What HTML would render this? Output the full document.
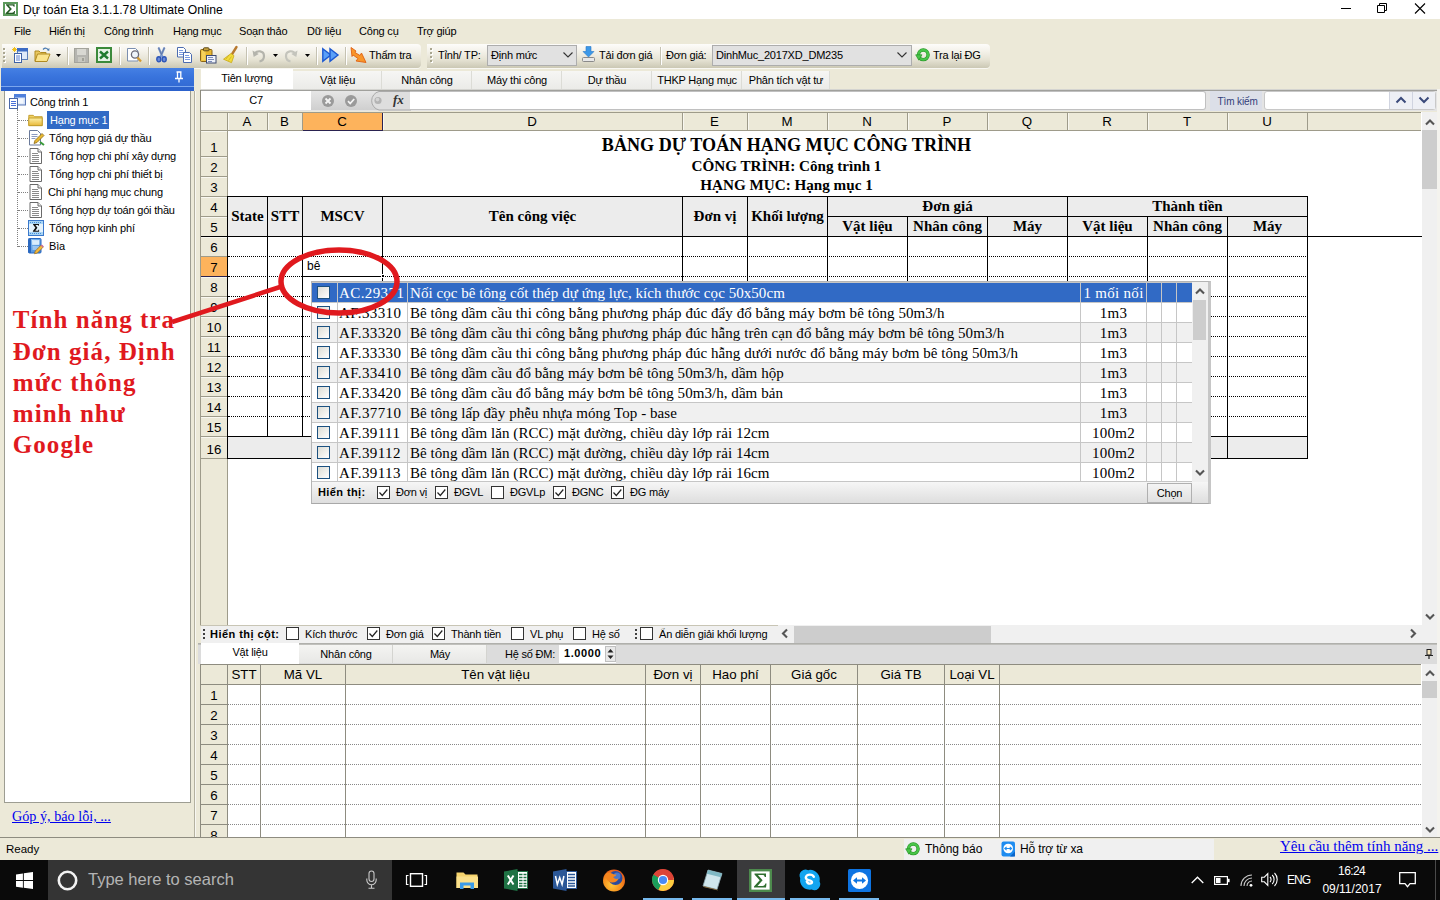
<!DOCTYPE html>
<html><head><meta charset="utf-8"><title>Du toan Eta</title>
<style>
html,body{margin:0;padding:0;}
body{width:1440px;height:900px;overflow:hidden;background:#ece9d8;position:relative;font-family:"Liberation Sans",sans-serif;font-size:11px;color:#000;}
div{position:absolute;box-sizing:border-box;}
svg{position:absolute;overflow:visible;}
.t{white-space:nowrap;line-height:1;}
</style></head><body>

<div style="left:0px;top:0px;width:1440px;height:19px;background:#fff;"></div>
<svg style="left:3px;top:2px" width="15" height="14" viewBox="0 0 15 14"><rect x="1" y="1" width="13" height="12" fill="#fff" stroke="#5c9a5c" stroke-width="2"/><path d="M3 2.200h8.600v2.600h-0.900c-0.200-1-0.700-1.400-1.800-1.400h-3.300l3.300 3.500-3.600 3.800h3.800c1.200 0 1.800-0.500 2-1.600h0.900l-0.300 2.900h-9.200v-0.700l4.200-4.400-3.700-4z" fill="#245a24"/></svg>
<div class="t" style="left:23px;top:4px;font-size:12.2px;color:#000;">Dự toán Eta 3.1.1.78 Ultimate Online</div>
<svg style="left:1340px;top:0" width="100" height="20"><path d="M1 8.5h10" stroke="#000" stroke-width="1"/><path d="M37.5 5.5h7v7h-7z M39.5 5.5v-2h7v7h-2" fill="none" stroke="#000" stroke-width="1"/><path d="M75 3.5l10 10M85 3.5l-10 10" stroke="#000" stroke-width="1.1"/></svg>
<div class="t" style="left:14px;top:26px;font-size:11px;color:#000;letter-spacing:-0.2px;">File</div>
<div class="t" style="left:49px;top:26px;font-size:11px;color:#000;letter-spacing:-0.2px;">Hiển thị</div>
<div class="t" style="left:104px;top:26px;font-size:11px;color:#000;letter-spacing:-0.2px;">Công trình</div>
<div class="t" style="left:173px;top:26px;font-size:11px;color:#000;letter-spacing:-0.2px;">Hạng mục</div>
<div class="t" style="left:239px;top:26px;font-size:11px;color:#000;letter-spacing:-0.2px;">Soạn thảo</div>
<div class="t" style="left:307px;top:26px;font-size:11px;color:#000;letter-spacing:-0.2px;">Dữ liệu</div>
<div class="t" style="left:359px;top:26px;font-size:11px;color:#000;letter-spacing:-0.2px;">Công cụ</div>
<div class="t" style="left:417px;top:26px;font-size:11px;color:#000;letter-spacing:-0.2px;">Trợ giúp</div>
<div style="left:2px;top:44px;width:419px;height:24px;background:linear-gradient(#fdfcfa 0%,#f4f2ea 30%,#e6e3d4 65%,#cbc8b4 100%);border-radius:0 4px 4px 0;box-shadow:0 1px 0 #f8f7f2;"></div>
<div style="left:427px;top:44px;width:563px;height:24px;background:linear-gradient(#fdfcfa 0%,#f4f2ea 30%,#e6e3d4 65%,#cbc8b4 100%);border-radius:0 4px 4px 0;box-shadow:0 1px 0 #f8f7f2;"></div>
<svg style="left:3px;top:48px" width="4" height="16"><rect x="1" y="1" width="2" height="2" fill="#fff"/><rect x="0" y="0" width="2" height="2" fill="#a9a690"/><rect x="1" y="5" width="2" height="2" fill="#fff"/><rect x="0" y="4" width="2" height="2" fill="#a9a690"/><rect x="1" y="9" width="2" height="2" fill="#fff"/><rect x="0" y="8" width="2" height="2" fill="#a9a690"/><rect x="1" y="13" width="2" height="2" fill="#fff"/><rect x="0" y="12" width="2" height="2" fill="#a9a690"/></svg>
<svg style="left:12px;top:47px" width="17" height="16"><rect x="5.5" y="1.5" width="10" height="11" fill="#dfeaf8" stroke="#5b7fb8"/><rect x="5.5" y="1.5" width="10" height="2.5" fill="#3d6cc4" stroke="#3d6cc4"/>
<rect x="2.5" y="6.5" width="7" height="9" fill="#fff" stroke="#3f62a6"/><path d="M4 9h4M4 11h4M4 13h4" stroke="#5b7fd0" stroke-width="1"/>
<path d="M2.5 0v5M0 2.5h5M0.8 0.8l3.4 3.4M4.2 0.8l-3.4 3.4" stroke="#f0c020" stroke-width="1"/></svg>
<svg style="left:34px;top:47px" width="17" height="16"><path d="M1 14V4h4l1.5 1.5H12V7" fill="#e9c860" stroke="#b08a20"/><path d="M1 14.5l2.5-7.5h12.5l-3 7.5z" fill="#fbe48c" stroke="#b08a20"/>
<path d="M9 2.5c2-2 4.5-1.5 5.5 0.5" fill="none" stroke="#4a7ab0" stroke-width="1.2"/><path d="M15.5 1l-0.3 3-2.6-1z" fill="#4a7ab0"/></svg>
<svg style="left:56px;top:54px" width="5" height="3"><path d="M0 0h5l-2.5 3z" fill="#000"/></svg>
<div style="left:67px;top:47px;width:1px;height:18px;background:#c5c2b2;"></div>
<div style="left:68px;top:47px;width:1px;height:18px;background:#fff;"></div>
<svg style="left:74px;top:48px" width="15" height="15"><rect x="0.5" y="0.5" width="14" height="14" fill="#b5b5b0" stroke="#a4a49c"/><rect x="3" y="1" width="9" height="6" fill="#d8d8d2"/><rect x="4" y="9" width="7" height="5" fill="#c8c8c0"/><rect x="8" y="10" width="2" height="3" fill="#a0a098"/></svg>
<svg style="left:96px;top:47px" width="16" height="16"><rect x="1" y="1" width="14" height="14" fill="#e6f2e6" stroke="#3b8a3b" stroke-width="2"/><path d="M4 4.5l8 7M12 4.5l-8 7" stroke="#1f7a2f" stroke-width="2.4"/></svg>
<div style="left:119px;top:47px;width:1px;height:18px;background:#c5c2b2;"></div>
<div style="left:120px;top:47px;width:1px;height:18px;background:#fff;"></div>
<svg style="left:126px;top:47px" width="16" height="17"><path d="M1.5 1.5h8l2.5 2.5v10h-10.5z" fill="#fff" stroke="#7b8fb0"/><circle cx="9" cy="7.5" r="3.6" fill="#eef4fb" stroke="#6a6a78" stroke-width="1.3"/><path d="M11.5 10.5l3.5 4" stroke="#d49a30" stroke-width="2.2"/></svg>
<div style="left:148px;top:47px;width:1px;height:18px;background:#c5c2b2;"></div>
<div style="left:149px;top:47px;width:1px;height:18px;background:#fff;"></div>
<svg style="left:156px;top:47px" width="11" height="16"><path d="M2.500 0.500l4 9.500M8.500 0.500l-4 9.500" stroke="#7d9bd0" stroke-width="2.100"/><path d="M2.500 0.500l3 7M8.500 0.500l-3 7" stroke="#5a6f9a" stroke-width="0.800"/><ellipse cx="2.800" cy="12.300" rx="2" ry="2.600" fill="#6a8ad8" stroke="#2c55b8" stroke-width="1.400"/><ellipse cx="8.200" cy="12.300" rx="2" ry="2.600" fill="#6a8ad8" stroke="#2c55b8" stroke-width="1.400"/></svg>
<svg style="left:177px;top:47px" width="16" height="16"><path d="M0.5 0.5h6l2 2v7.5h-8z" fill="#fff" stroke="#4c6cb0"/><path d="M2 3.5h4M2 5.5h5M2 7.5h5" stroke="#7a9ae0"/><path d="M6.500 5.500h6l2 2v8h-8z" fill="#fff" stroke="#4c6cb0"/><path d="M8 8.500h4M8 10.500h5M8 12.500h5" stroke="#7a9ae0"/></svg>
<svg style="left:200px;top:47px" width="17" height="17"><rect x="0.500" y="2.500" width="11.500" height="12" rx="1" fill="#e8b830" stroke="#8a6414"/><rect x="1.500" y="3.500" width="4" height="10" fill="#f6d25c"/><rect x="3.500" y="0.800" width="5.500" height="3" rx="0.800" fill="#c8a23c" stroke="#5c4a1c"/><rect x="6.500" y="8.500" width="9.500" height="7.500" fill="#eef2fa" stroke="#3c4a70"/><path d="M8 10.500h5M8 12.500h6M8 14.500h4" stroke="#7a8ab8"/></svg>
<svg style="left:223px;top:46px" width="16" height="18"><path d="M13.5 1l-5 8" stroke="#b87a30" stroke-width="2.4" stroke-linecap="round"/><path d="M8 7.500l3 2.200-2.500 7-8-3.500z" fill="#f2dc3c" stroke="#c8a818" stroke-width="0.8"/><path d="M3 13l3-4M5.500 14.500l3-4" stroke="#c8a818" stroke-width="0.7"/></svg>
<div style="left:246px;top:47px;width:1px;height:18px;background:#c5c2b2;"></div>
<div style="left:247px;top:47px;width:1px;height:18px;background:#fff;"></div>
<svg style="left:252px;top:48px" width="14" height="14"><path d="M2 6.500c3-5 10-4 10 1.500 0 3-2 5-4.500 5.500" fill="none" stroke="#b4b4ac" stroke-width="2.200"/><path d="M0.500 2.500l1.200 6.500 5-3z" fill="#b4b4ac"/></svg>
<svg style="left:273px;top:54px" width="5" height="3"><path d="M0 0h5l-2.5 3z" fill="#000"/></svg>
<svg style="left:284px;top:48px" width="14" height="14"><path d="M12 6.500c-3-5-10-4-10 1.500 0 3 2 5 4.500 5.500" fill="none" stroke="#c4c4bc" stroke-width="2.200"/><path d="M13.500 2.500l-1.200 6.500-5-3z" fill="#c4c4bc"/></svg>
<svg style="left:305px;top:54px" width="5" height="3"><path d="M0 0h5l-2.5 3z" fill="#000"/></svg>
<div style="left:316px;top:47px;width:1px;height:18px;background:#c5c2b2;"></div>
<div style="left:317px;top:47px;width:1px;height:18px;background:#fff;"></div>
<svg style="left:322px;top:48px" width="17" height="14"><path d="M0.800 0.800l8 6.200-8 6.200z" fill="#5aa0f8" stroke="#1b58d0" stroke-width="1.400"/><path d="M8 0.800l8 6.200-8 6.200z" fill="#5aa0f8" stroke="#1b58d0" stroke-width="1.400"/></svg>
<div style="left:345px;top:47px;width:1px;height:18px;background:#c5c2b2;"></div>
<div style="left:346px;top:47px;width:1px;height:18px;background:#fff;"></div>
<svg style="left:350px;top:47px" width="17" height="17"><path d="M1 0.500l5 3.500-1 1.500 5 3 1.500-2.500 4.500 9.500-10-1.500 2-2.500-5-3.500-1 1.500z" fill="#f8962a" stroke="#e06010" stroke-width="0.900"/></svg>
<div class="t" style="left:369px;top:50px;font-size:11px;color:#000;letter-spacing:-0.2px;">Thẩm tra</div>
<svg style="left:430px;top:48px" width="4" height="16"><rect x="1" y="1" width="2" height="2" fill="#fff"/><rect x="0" y="0" width="2" height="2" fill="#a9a690"/><rect x="1" y="5" width="2" height="2" fill="#fff"/><rect x="0" y="4" width="2" height="2" fill="#a9a690"/><rect x="1" y="9" width="2" height="2" fill="#fff"/><rect x="0" y="8" width="2" height="2" fill="#a9a690"/><rect x="1" y="13" width="2" height="2" fill="#fff"/><rect x="0" y="12" width="2" height="2" fill="#a9a690"/></svg>
<div class="t" style="left:438px;top:50px;font-size:11px;color:#000;letter-spacing:-0.2px;">Tỉnh/ TP:</div>
<div style="left:487px;top:45px;width:90px;height:21px;background:#e1e1e1;border:1px solid #adadad;"></div>
<div class="t" style="left:491px;top:50px;font-size:11px;color:#000;letter-spacing:-0.2px;">Định mức</div>
<svg style="left:563px;top:52px" width="10" height="6"><path d="M0.500 0.500l4.500 4.500 4.500-4.500" fill="none" stroke="#333" stroke-width="1.100"/></svg>
<svg style="left:582px;top:46px" width="13" height="17"><path d="M4 0.500h5v5h3l-5.500 5.500-5.500-5.500h3z" fill="#3c98e8" stroke="#2878c8" stroke-width="0.600"/><rect x="0.500" y="11.500" width="12" height="4" rx="1" fill="#e8e8e8" stroke="#8a8a8a"/></svg>
<div class="t" style="left:599px;top:50px;font-size:11px;color:#000;letter-spacing:-0.2px;">Tải đơn giá</div>
<div style="left:660px;top:47px;width:1px;height:18px;background:#c5c2b2;"></div>
<div style="left:661px;top:47px;width:1px;height:18px;background:#fff;"></div>
<div class="t" style="left:666px;top:50px;font-size:11px;color:#000;letter-spacing:-0.2px;">Đơn giá:</div>
<div style="left:712px;top:45px;width:200px;height:21px;background:#e1e1e1;border:1px solid #adadad;"></div>
<div class="t" style="left:716px;top:50px;font-size:11px;color:#000;letter-spacing:-0.2px;">DinhMuc_2017XD_DM235</div>
<svg style="left:897px;top:52px" width="10" height="6"><path d="M0.500 0.500l4.500 4.500 4.500-4.500" fill="none" stroke="#333" stroke-width="1.100"/></svg>
<svg style="left:916px;top:48px" width="14" height="14" viewBox="0 0 14 14"><circle cx="7.300" cy="6.800" r="4.800" fill="none" stroke="#279427" stroke-width="3.400"/><circle cx="7.300" cy="6.800" r="4.800" fill="none" stroke="#48c448" stroke-width="2.300"/><path d="M-0.300 6.800h6.300l-3.200 5.400z" fill="#48c448" stroke="#279427" stroke-width="0.700"/></svg>
<div class="t" style="left:933px;top:50px;font-size:11px;color:#000;letter-spacing:-0.2px;">Tra lại ĐG</div>
<div style="left:1px;top:68px;width:193px;height:23px;background:linear-gradient(#4580e4 0%,#3873dc 40%,#2f66d0 100%);"></div>
<div style="left:1px;top:86px;width:193px;height:1px;background:#7aa6ee;"></div>
<div style="left:1px;top:87px;width:193px;height:4px;background:#2c62cc;"></div>
<svg style="left:174px;top:71px" width="10" height="12"><path d="M2.500 1h5M3.500 1v6M6.800 1v6M1 7.500h8M5 7.500v4" stroke="#fff" stroke-width="1.300" fill="none"/></svg>
<div style="left:1px;top:91px;width:4px;height:712px;background:#ece9d8;"></div>
<div style="left:4px;top:91px;width:187px;height:712px;background:#fff;border:1px solid #9d9d92;border-top:none;"></div>
<div style="left:194px;top:91px;width:1px;height:746px;background:#b4b1a0;"></div>
<div style="left:195px;top:91px;width:1px;height:746px;background:#f8f7f2;"></div>
<div style="left:17px;top:109px;width:1px;height:138px;border-left:1px dotted #808080;"></div>
<div style="left:18px;top:120px;width:10px;height:1px;border-top:1px dotted #808080;"></div>
<div style="left:18px;top:138px;width:10px;height:1px;border-top:1px dotted #808080;"></div>
<div style="left:18px;top:156px;width:10px;height:1px;border-top:1px dotted #808080;"></div>
<div style="left:18px;top:174px;width:10px;height:1px;border-top:1px dotted #808080;"></div>
<div style="left:18px;top:192px;width:10px;height:1px;border-top:1px dotted #808080;"></div>
<div style="left:18px;top:210px;width:10px;height:1px;border-top:1px dotted #808080;"></div>
<div style="left:18px;top:228px;width:10px;height:1px;border-top:1px dotted #808080;"></div>
<div style="left:18px;top:246px;width:10px;height:1px;border-top:1px dotted #808080;"></div>
<svg style="left:9px;top:94px" width="17" height="15"><rect x="5.500" y="0.500" width="11" height="10.500" fill="#d4e2f8" stroke="#5a78b8"/><rect x="5.500" y="0.500" width="11" height="2.500" fill="#4f80dc" stroke="#4f80dc"/><rect x="7.500" y="4.500" width="7" height="5" fill="#f4f8fe"/>
<rect x="0.500" y="4.500" width="8" height="10" fill="#fff" stroke="#4a68a8"/><path d="M2 7.500h5M2 9.500h5M2 11.500h5" stroke="#4a70d8"/></svg>
<div class="t" style="left:30px;top:97px;font-size:11px;color:#000;letter-spacing:-0.2px;">Công trình 1</div>
<svg style="left:28px;top:114px" width="15" height="12.5" viewBox="0 0 16 14"><path d="M0.500 13V1.500h5l1.500 1.500h8.500v10z" fill="#f0d060" stroke="#c09a28"/><path d="M0.500 13V4.500h15v8.500z" fill="url(#fg)" stroke="#c09a28"/><defs><linearGradient id="fg" x1="0" y1="0" x2="0" y2="1"><stop offset="0" stop-color="#fdf0a8"/><stop offset="1" stop-color="#e8b838"/></linearGradient></defs></svg>
<div style="left:47px;top:111px;width:62px;height:18px;background:#316ac5;"></div>
<div class="t" style="left:50px;top:115px;font-size:11px;color:#fff;letter-spacing:-0.2px;">Hạng mục 1</div>
<svg style="left:29px;top:130px" width="16" height="16"><path d="M0.500 0.500h8l3 3v11.500h-11z" fill="#fff" stroke="#6a7a9a"/><path d="M2.500 4.500h6M2.500 6.500h6M2.500 8.500h4" stroke="#8a9ac0"/><path d="M5 13.500l1-3 7-7 2 2-7 7z" fill="#e8b830" stroke="#8a6a18" stroke-width="0.800"/><path d="M11 12l4 3" stroke="#3a9a3a" stroke-width="2"/></svg>
<div class="t" style="left:49px;top:133px;font-size:11px;color:#000;letter-spacing:-0.2px;">Tổng hợp giá dự thầu</div>
<div class="t" style="left:49px;top:151px;font-size:11px;color:#000;letter-spacing:-0.2px;">Tổng hợp chi phí xây dựng</div>
<div class="t" style="left:49px;top:169px;font-size:11px;color:#000;letter-spacing:-0.2px;">Tổng hợp chi phí thiết bị</div>
<div class="t" style="left:48px;top:187px;font-size:11px;color:#000;letter-spacing:-0.2px;">Chi phí hạng mục chung</div>
<div class="t" style="left:49px;top:205px;font-size:11px;color:#000;letter-spacing:-0.2px;">Tổng hợp dự toán gói thầu</div>
<div class="t" style="left:49px;top:223px;font-size:11px;color:#000;letter-spacing:-0.2px;">Tổng hợp kinh phí</div>
<div class="t" style="left:49px;top:241px;font-size:11px;color:#000;letter-spacing:-0.2px;">Bìa</div>
<svg style="left:29px;top:148px" width="14" height="16" viewBox="0 0 13 16"><path d="M0.500 0.500h8l3.500 3.500v11.500h-11.500z" fill="#fff" stroke="#6a6a6a"/><path d="M8.500 0.500v3.500h3.500" fill="#eee" stroke="#6a6a6a"/><path d="M2.500 5.500h6M2.500 7.500h7M2.500 9.500h7M2.500 11.500h7M2.500 13.500h7" stroke="#8a8a8a"/></svg>
<svg style="left:29px;top:166px" width="14" height="16" viewBox="0 0 13 16"><path d="M0.500 0.500h8l3.500 3.500v11.500h-11.500z" fill="#fff" stroke="#6a6a6a"/><path d="M8.500 0.500v3.500h3.500" fill="#eee" stroke="#6a6a6a"/><path d="M2.500 5.500h6M2.500 7.500h7M2.500 9.500h7M2.500 11.500h7M2.500 13.500h7" stroke="#8a8a8a"/></svg>
<svg style="left:29px;top:184px" width="14" height="16" viewBox="0 0 13 16"><path d="M0.500 0.500h8l3.500 3.500v11.500h-11.500z" fill="#fff" stroke="#6a6a6a"/><path d="M8.500 0.500v3.500h3.500" fill="#eee" stroke="#6a6a6a"/><path d="M2.500 5.500h6M2.500 7.500h7M2.500 9.500h7M2.500 11.500h7M2.500 13.500h7" stroke="#8a8a8a"/></svg>
<svg style="left:29px;top:202px" width="14" height="16" viewBox="0 0 13 16"><path d="M0.500 0.500h8l3.500 3.500v11.500h-11.500z" fill="#fff" stroke="#6a6a6a"/><path d="M8.500 0.500v3.500h3.500" fill="#eee" stroke="#6a6a6a"/><path d="M2.500 5.500h6M2.500 7.500h7M2.500 9.500h7M2.500 11.500h7M2.500 13.500h7" stroke="#8a8a8a"/></svg>
<svg style="left:28px;top:220px" width="16" height="16"><rect x="0.500" y="0.500" width="15" height="15" fill="#e4f2fc" stroke="#3a78cc"/><rect x="1" y="1" width="14" height="3" fill="#a8d4f4"/><rect x="1" y="12" width="14" height="3" fill="#a8d4f4"/><path d="M2 2.500h12M2 13.500h12" stroke="#4a90d8" stroke-dasharray="1 1"/><path d="M5 4h6v1.800h-0.800v-0.800h-2.800l2 2.800-2.100 2.900h3v-0.900h0.800v1.900h-6.200v-0.700l2.500-3.300-2.400-3.100z" fill="#111"/></svg>
<svg style="left:28px;top:238px" width="17" height="17"><defs><linearGradient id="nb" x1="0" y1="0" x2="1" y2="1"><stop offset="0" stop-color="#8cc4f4"/><stop offset="1" stop-color="#3a80d8"/></linearGradient></defs><rect x="0.500" y="0.500" width="12.500" height="14.500" rx="1" fill="url(#nb)" stroke="#2a68c0"/><rect x="0.500" y="0.500" width="2.500" height="14.500" fill="#2a68c0"/><rect x="4.500" y="2.500" width="6.500" height="4" fill="#d8ecfc" stroke="#eaf4fe" stroke-width="0.600"/><path d="M4.500 9h6.500M4.500 11h5" stroke="#d8ecfc"/><path d="M6.500 15.800l0.800-2.800 6-6 2 2-6 6z" fill="#f4b83c" stroke="#a07018" stroke-width="0.700"/><path d="M13.300 7l2 2" stroke="#c86aa0" stroke-width="1.600"/></svg>
<div class="t" style="left:12px;top:809px;font-size:14.2px;color:#0000ee;font-family:'Liberation Serif', serif;text-decoration:underline;">Góp ý, báo lỗi, ...</div>
<div style="left:201px;top:69px;width:92px;height:21px;background:#fff;"></div>
<div style="left:293px;top:71px;width:89px;height:18px;background:linear-gradient(#f6f6f4,#ebebe8);border-right:1px solid #dcdcd6;"></div>
<div style="left:382px;top:71px;width:90px;height:18px;background:linear-gradient(#f6f6f4,#ebebe8);border-right:1px solid #dcdcd6;"></div>
<div style="left:472px;top:71px;width:90px;height:18px;background:linear-gradient(#f6f6f4,#ebebe8);border-right:1px solid #dcdcd6;"></div>
<div style="left:562px;top:71px;width:90px;height:18px;background:linear-gradient(#f6f6f4,#ebebe8);border-right:1px solid #dcdcd6;"></div>
<div style="left:652px;top:71px;width:90px;height:18px;background:linear-gradient(#f6f6f4,#ebebe8);border-right:1px solid #dcdcd6;"></div>
<div style="left:742px;top:71px;width:88px;height:18px;background:linear-gradient(#f6f6f4,#ebebe8);border-right:1px solid #dcdcd6;"></div>
<div class="t" style="left:201px;top:73px;font-size:11px;color:#000;letter-spacing:-0.2px;width:92px;text-align:center;">Tiên lượng</div>
<div class="t" style="left:293px;top:75px;font-size:11px;color:#000;letter-spacing:-0.2px;width:89px;text-align:center;">Vật liệu</div>
<div class="t" style="left:382px;top:75px;font-size:11px;color:#000;letter-spacing:-0.2px;width:90px;text-align:center;">Nhân công</div>
<div class="t" style="left:472px;top:75px;font-size:11px;color:#000;letter-spacing:-0.2px;width:90px;text-align:center;">Máy thi công</div>
<div class="t" style="left:562px;top:75px;font-size:11px;color:#000;letter-spacing:-0.2px;width:90px;text-align:center;">Dự thầu</div>
<div class="t" style="left:652px;top:75px;font-size:11px;color:#000;letter-spacing:-0.2px;width:90px;text-align:center;">THKP Hạng mục</div>
<div class="t" style="left:742px;top:75px;font-size:11px;color:#000;letter-spacing:-0.2px;width:88px;text-align:center;">Phân tích vật tư</div>
<div style="left:200px;top:89px;width:1237px;height:1px;background:#d4d4d0;"></div>
<div style="left:200px;top:90px;width:1237px;height:1px;background:#a0a09c;"></div>
<div style="left:200px;top:90px;width:1px;height:22px;background:#8c8a7c;"></div>
<div style="left:201px;top:91px;width:1236px;height:20px;background:#e4e4e4;"></div>
<div style="left:201px;top:91px;width:110px;height:19px;background:#fff;"></div>
<div class="t" style="left:201px;top:95px;font-size:11px;color:#000;letter-spacing:-0.2px;width:110px;text-align:center;">C7</div>
<div style="left:311px;top:91px;width:100px;height:19px;background:linear-gradient(#e6e6e6,#cfcfcf);"></div>
<svg style="left:321px;top:94px" width="14" height="14"><circle cx="7" cy="7" r="6" fill="#9a9a9a"/><path d="M4.500 4.500l5 5M9.500 4.500l-5 5" stroke="#f4f4f4" stroke-width="1.800"/></svg>
<svg style="left:344px;top:94px" width="14" height="14"><circle cx="7" cy="7" r="6" fill="#9a9a9a"/><path d="M4 7.200l2.200 2.300 4-4.500" stroke="#f4f4f4" stroke-width="1.800" fill="none"/></svg>
<svg style="left:367px;top:91px" width="44" height="19"><path d="M12 0.500a9.500 9.500 0 0 0 0 18.500h32v-18.500z" fill="#dedede" stroke="#9c9c9c" stroke-width="0.800"/><circle cx="11" cy="9.500" r="3.600" fill="#b4b4b4"/><circle cx="10.500" cy="8.600" r="1.800" fill="#d4d4d4"/></svg>
<div class="t" style="left:393px;top:93px;font-size:13px;color:#333;font-family:'Liberation Serif', serif;font-weight:bold;font-style:italic;"><i>f</i>x</div>
<div style="left:410px;top:91px;width:796px;height:19px;background:#fff;border:1px solid #c0c0c0;border-radius:0 3px 3px 0;border-left:none;"></div>
<div style="left:1210px;top:91px;width:52px;height:20px;background:#dcdfe8;"></div>
<div class="t" style="left:1217.5px;top:97px;font-size:10px;color:#33407a;letter-spacing:-0.1px;">Tìm kiếm</div>
<div style="left:1264px;top:91px;width:172px;height:19px;background:#fff;border:1px solid #c8c8c8;border-radius:3px;"></div>
<div style="left:1389px;top:92px;width:46px;height:17px;background:#eef0f5;border-left:1px solid #d0d4e0;"></div>
<div style="left:1412px;top:92px;width:1px;height:17px;background:#d0d4e0;"></div>
<svg style="left:1395px;top:96px" width="12" height="8"><path d="M1.500 6.500l4.500-4.500 4.500 4.500" fill="none" stroke="#3a4a7a" stroke-width="2"/></svg>
<svg style="left:1418px;top:96px" width="12" height="8"><path d="M1.500 1.500l4.500 4.500 4.500-4.500" fill="none" stroke="#3a4a7a" stroke-width="2"/></svg>
<div style="left:200px;top:112px;width:1222px;height:514px;background:#fff;"></div>
<div style="left:200px;top:112px;width:1px;height:514px;background:#9e9b8a;"></div>
<div style="left:201px;top:112px;width:1220px;height:19px;background:#ece9d8;border-top:1px solid #9e9b8a;border-bottom:1px solid #9e9b8a;"></div>
<div style="left:201px;top:131px;width:27px;height:494px;background:#ece9d8;border-right:1px solid #9e9b8a;"></div>
<div style="left:227px;top:113px;width:1px;height:17px;background:#9e9b8a;"></div>
<div style="left:267px;top:113px;width:1px;height:17px;background:#9e9b8a;"></div>
<div style="left:228px;top:113px;width:1px;height:17px;background:#f8f7f0;"></div>
<div class="t" style="left:227.5px;top:114.5px;font-size:13.3px;color:#000;width:39px;text-align:center;">A</div>
<div style="left:302px;top:113px;width:1px;height:17px;background:#9e9b8a;"></div>
<div style="left:268px;top:113px;width:1px;height:17px;background:#f8f7f0;"></div>
<div class="t" style="left:267.5px;top:114.5px;font-size:13.3px;color:#000;width:34px;text-align:center;">B</div>
<div style="left:303px;top:113px;width:80px;height:18px;background:#fdb35c;border-right:1px solid #2a2250;border-bottom:1px solid #2a2250;"></div>
<div class="t" style="left:302.5px;top:114.5px;font-size:13.3px;color:#000;width:79px;text-align:center;">C</div>
<div style="left:682px;top:113px;width:1px;height:17px;background:#9e9b8a;"></div>
<div style="left:383px;top:113px;width:1px;height:17px;background:#f8f7f0;"></div>
<div class="t" style="left:382.5px;top:114.5px;font-size:13.3px;color:#000;width:299px;text-align:center;">D</div>
<div style="left:747px;top:113px;width:1px;height:17px;background:#9e9b8a;"></div>
<div style="left:683px;top:113px;width:1px;height:17px;background:#f8f7f0;"></div>
<div class="t" style="left:682.5px;top:114.5px;font-size:13.3px;color:#000;width:64px;text-align:center;">E</div>
<div style="left:827px;top:113px;width:1px;height:17px;background:#9e9b8a;"></div>
<div style="left:748px;top:113px;width:1px;height:17px;background:#f8f7f0;"></div>
<div class="t" style="left:747.5px;top:114.5px;font-size:13.3px;color:#000;width:79px;text-align:center;">M</div>
<div style="left:907px;top:113px;width:1px;height:17px;background:#9e9b8a;"></div>
<div style="left:828px;top:113px;width:1px;height:17px;background:#f8f7f0;"></div>
<div class="t" style="left:827.5px;top:114.5px;font-size:13.3px;color:#000;width:79px;text-align:center;">N</div>
<div style="left:987px;top:113px;width:1px;height:17px;background:#9e9b8a;"></div>
<div style="left:908px;top:113px;width:1px;height:17px;background:#f8f7f0;"></div>
<div class="t" style="left:907.5px;top:114.5px;font-size:13.3px;color:#000;width:79px;text-align:center;">P</div>
<div style="left:1067px;top:113px;width:1px;height:17px;background:#9e9b8a;"></div>
<div style="left:988px;top:113px;width:1px;height:17px;background:#f8f7f0;"></div>
<div class="t" style="left:987.5px;top:114.5px;font-size:13.3px;color:#000;width:79px;text-align:center;">Q</div>
<div style="left:1147px;top:113px;width:1px;height:17px;background:#9e9b8a;"></div>
<div style="left:1068px;top:113px;width:1px;height:17px;background:#f8f7f0;"></div>
<div class="t" style="left:1067.5px;top:114.5px;font-size:13.3px;color:#000;width:79px;text-align:center;">R</div>
<div style="left:1227px;top:113px;width:1px;height:17px;background:#9e9b8a;"></div>
<div style="left:1148px;top:113px;width:1px;height:17px;background:#f8f7f0;"></div>
<div class="t" style="left:1147.5px;top:114.5px;font-size:13.3px;color:#000;width:79px;text-align:center;">T</div>
<div style="left:1307px;top:113px;width:1px;height:17px;background:#9e9b8a;"></div>
<div style="left:1228px;top:113px;width:1px;height:17px;background:#f8f7f0;"></div>
<div class="t" style="left:1227.5px;top:114.5px;font-size:13.3px;color:#000;width:79px;text-align:center;">U</div>
<div style="left:201px;top:156px;width:26px;height:1px;background:#9e9b8a;"></div>
<div style="left:201px;top:131px;width:26px;height:1px;background:#f8f7f0;"></div>
<div class="t" style="left:201px;top:141px;font-size:13.3px;color:#000;width:26px;text-align:center;">1</div>
<div style="left:201px;top:176px;width:26px;height:1px;background:#9e9b8a;"></div>
<div style="left:201px;top:157px;width:26px;height:1px;background:#f8f7f0;"></div>
<div class="t" style="left:201px;top:161px;font-size:13.3px;color:#000;width:26px;text-align:center;">2</div>
<div style="left:201px;top:196px;width:26px;height:1px;background:#9e9b8a;"></div>
<div style="left:201px;top:177px;width:26px;height:1px;background:#f8f7f0;"></div>
<div class="t" style="left:201px;top:181px;font-size:13.3px;color:#000;width:26px;text-align:center;">3</div>
<div style="left:201px;top:216px;width:26px;height:1px;background:#9e9b8a;"></div>
<div style="left:201px;top:197px;width:26px;height:1px;background:#f8f7f0;"></div>
<div class="t" style="left:201px;top:201px;font-size:13.3px;color:#000;width:26px;text-align:center;">4</div>
<div style="left:201px;top:236px;width:26px;height:1px;background:#9e9b8a;"></div>
<div style="left:201px;top:217px;width:26px;height:1px;background:#f8f7f0;"></div>
<div class="t" style="left:201px;top:221px;font-size:13.3px;color:#000;width:26px;text-align:center;">5</div>
<div style="left:201px;top:256px;width:26px;height:1px;background:#9e9b8a;"></div>
<div style="left:201px;top:237px;width:26px;height:1px;background:#f8f7f0;"></div>
<div class="t" style="left:201px;top:241px;font-size:13.3px;color:#000;width:26px;text-align:center;">6</div>
<div style="left:201px;top:257px;width:27px;height:20px;background:#fdb35c;border-right:1px solid #2a2250;border-bottom:1px solid #2a2250;"></div>
<div class="t" style="left:201px;top:261px;font-size:13.3px;color:#000;width:26px;text-align:center;">7</div>
<div style="left:201px;top:296px;width:26px;height:1px;background:#9e9b8a;"></div>
<div style="left:201px;top:277px;width:26px;height:1px;background:#f8f7f0;"></div>
<div class="t" style="left:201px;top:281px;font-size:13.3px;color:#000;width:26px;text-align:center;">8</div>
<div style="left:201px;top:316px;width:26px;height:1px;background:#9e9b8a;"></div>
<div style="left:201px;top:297px;width:26px;height:1px;background:#f8f7f0;"></div>
<div class="t" style="left:201px;top:301px;font-size:13.3px;color:#000;width:26px;text-align:center;">9</div>
<div style="left:201px;top:336px;width:26px;height:1px;background:#9e9b8a;"></div>
<div style="left:201px;top:317px;width:26px;height:1px;background:#f8f7f0;"></div>
<div class="t" style="left:201px;top:321px;font-size:13.3px;color:#000;width:26px;text-align:center;">10</div>
<div style="left:201px;top:356px;width:26px;height:1px;background:#9e9b8a;"></div>
<div style="left:201px;top:337px;width:26px;height:1px;background:#f8f7f0;"></div>
<div class="t" style="left:201px;top:341px;font-size:13.3px;color:#000;width:26px;text-align:center;">11</div>
<div style="left:201px;top:376px;width:26px;height:1px;background:#9e9b8a;"></div>
<div style="left:201px;top:357px;width:26px;height:1px;background:#f8f7f0;"></div>
<div class="t" style="left:201px;top:361px;font-size:13.3px;color:#000;width:26px;text-align:center;">12</div>
<div style="left:201px;top:396px;width:26px;height:1px;background:#9e9b8a;"></div>
<div style="left:201px;top:377px;width:26px;height:1px;background:#f8f7f0;"></div>
<div class="t" style="left:201px;top:381px;font-size:13.3px;color:#000;width:26px;text-align:center;">13</div>
<div style="left:201px;top:416px;width:26px;height:1px;background:#9e9b8a;"></div>
<div style="left:201px;top:397px;width:26px;height:1px;background:#f8f7f0;"></div>
<div class="t" style="left:201px;top:401px;font-size:13.3px;color:#000;width:26px;text-align:center;">14</div>
<div style="left:201px;top:436px;width:26px;height:1px;background:#9e9b8a;"></div>
<div style="left:201px;top:417px;width:26px;height:1px;background:#f8f7f0;"></div>
<div class="t" style="left:201px;top:421px;font-size:13.3px;color:#000;width:26px;text-align:center;">15</div>
<div style="left:201px;top:458px;width:26px;height:1px;background:#9e9b8a;"></div>
<div style="left:201px;top:437px;width:26px;height:1px;background:#f8f7f0;"></div>
<div class="t" style="left:201px;top:443px;font-size:13.3px;color:#000;width:26px;text-align:center;">16</div>
<div class="t" style="left:486.5px;top:135.5px;font-size:18.1px;color:#000;font-family:'Liberation Serif', serif;font-weight:bold;width:600px;text-align:center;">BẢNG DỰ TOÁN HẠNG MỤC CÔNG TRÌNH</div>
<div class="t" style="left:486.5px;top:158.2px;font-size:15.15px;color:#000;font-family:'Liberation Serif', serif;font-weight:bold;width:600px;text-align:center;">CÔNG TRÌNH: Công trình 1</div>
<div class="t" style="left:486.5px;top:177.4px;font-size:15.15px;color:#000;font-family:'Liberation Serif', serif;font-weight:bold;width:600px;text-align:center;">HẠNG MỤC: Hạng mục 1</div>
<div style="left:227px;top:196px;width:1081px;height:41px;background:#ececec;border:1px solid #000;"></div>
<div style="left:267px;top:196px;width:1px;height:41px;background:#000;"></div>
<div style="left:302px;top:196px;width:1px;height:41px;background:#000;"></div>
<div style="left:382px;top:196px;width:1px;height:41px;background:#000;"></div>
<div style="left:682px;top:196px;width:1px;height:41px;background:#000;"></div>
<div style="left:747px;top:196px;width:1px;height:41px;background:#000;"></div>
<div style="left:827px;top:196px;width:1px;height:41px;background:#000;"></div>
<div style="left:1067px;top:196px;width:1px;height:41px;background:#000;"></div>
<div style="left:907px;top:216px;width:1px;height:21px;background:#000;"></div>
<div style="left:987px;top:216px;width:1px;height:21px;background:#000;"></div>
<div style="left:1147px;top:216px;width:1px;height:21px;background:#000;"></div>
<div style="left:1227px;top:216px;width:1px;height:21px;background:#000;"></div>
<div style="left:827px;top:216px;width:481px;height:1px;background:#000;"></div>
<div class="t" style="left:228px;top:208.5px;font-size:15px;color:#000;font-family:'Liberation Serif', serif;font-weight:bold;width:39px;text-align:center;">State</div>
<div class="t" style="left:268px;top:208.5px;font-size:15px;color:#000;font-family:'Liberation Serif', serif;font-weight:bold;width:34px;text-align:center;">STT</div>
<div class="t" style="left:303px;top:208.5px;font-size:15px;color:#000;font-family:'Liberation Serif', serif;font-weight:bold;width:79px;text-align:center;">MSCV</div>
<div class="t" style="left:383px;top:208.5px;font-size:15px;color:#000;font-family:'Liberation Serif', serif;font-weight:bold;width:299px;text-align:center;">Tên công việc</div>
<div class="t" style="left:683px;top:208.5px;font-size:15px;color:#000;font-family:'Liberation Serif', serif;font-weight:bold;width:64px;text-align:center;">Đơn vị</div>
<div class="t" style="left:748px;top:208.5px;font-size:15px;color:#000;font-family:'Liberation Serif', serif;font-weight:bold;width:79px;text-align:center;">Khối lượng</div>
<div class="t" style="left:828px;top:198.5px;font-size:15px;color:#000;font-family:'Liberation Serif', serif;font-weight:bold;width:239px;text-align:center;">Đơn giá</div>
<div class="t" style="left:1068px;top:198.5px;font-size:15px;color:#000;font-family:'Liberation Serif', serif;font-weight:bold;width:239px;text-align:center;">Thành tiền</div>
<div class="t" style="left:828px;top:218.5px;font-size:15px;color:#000;font-family:'Liberation Serif', serif;font-weight:bold;width:79px;text-align:center;">Vật liệu</div>
<div class="t" style="left:1068px;top:218.5px;font-size:15px;color:#000;font-family:'Liberation Serif', serif;font-weight:bold;width:79px;text-align:center;">Vật liệu</div>
<div class="t" style="left:908px;top:218.5px;font-size:15px;color:#000;font-family:'Liberation Serif', serif;font-weight:bold;width:79px;text-align:center;">Nhân công</div>
<div class="t" style="left:1148px;top:218.5px;font-size:15px;color:#000;font-family:'Liberation Serif', serif;font-weight:bold;width:79px;text-align:center;">Nhân công</div>
<div class="t" style="left:988px;top:218.5px;font-size:15px;color:#000;font-family:'Liberation Serif', serif;font-weight:bold;width:79px;text-align:center;">Máy</div>
<div class="t" style="left:1228px;top:218.5px;font-size:15px;color:#000;font-family:'Liberation Serif', serif;font-weight:bold;width:79px;text-align:center;">Máy</div>
<div style="left:201px;top:236px;width:1221px;height:1px;background:#000;"></div>
<div style="left:228px;top:256px;width:1080px;height:1px;border-top:1px dotted #000;"></div>
<div style="left:228px;top:276px;width:1080px;height:1px;border-top:1px dotted #000;"></div>
<div style="left:228px;top:296px;width:1080px;height:1px;border-top:1px dotted #000;"></div>
<div style="left:228px;top:316px;width:1080px;height:1px;border-top:1px dotted #000;"></div>
<div style="left:228px;top:336px;width:1080px;height:1px;border-top:1px dotted #000;"></div>
<div style="left:228px;top:356px;width:1080px;height:1px;border-top:1px dotted #000;"></div>
<div style="left:228px;top:376px;width:1080px;height:1px;border-top:1px dotted #000;"></div>
<div style="left:228px;top:396px;width:1080px;height:1px;border-top:1px dotted #000;"></div>
<div style="left:228px;top:416px;width:1080px;height:1px;border-top:1px dotted #000;"></div>
<div style="left:227px;top:237px;width:1px;height:200px;background:#000;"></div>
<div style="left:267px;top:237px;width:1px;height:200px;background:#000;"></div>
<div style="left:302px;top:237px;width:1px;height:200px;background:#000;"></div>
<div style="left:382px;top:237px;width:1px;height:200px;background:#000;"></div>
<div style="left:682px;top:237px;width:1px;height:200px;background:#000;"></div>
<div style="left:747px;top:237px;width:1px;height:200px;background:#000;"></div>
<div style="left:827px;top:237px;width:1px;height:200px;background:#000;"></div>
<div style="left:907px;top:237px;width:1px;height:200px;background:#000;"></div>
<div style="left:987px;top:237px;width:1px;height:200px;background:#000;"></div>
<div style="left:1067px;top:237px;width:1px;height:200px;background:#000;"></div>
<div style="left:1147px;top:237px;width:1px;height:200px;background:#000;"></div>
<div style="left:1227px;top:237px;width:1px;height:200px;background:#000;"></div>
<div style="left:1307px;top:237px;width:1px;height:200px;background:#000;"></div>
<div style="left:228px;top:436px;width:1080px;height:23px;background:#ececec;border-top:1px solid #000;border-bottom:1px solid #000;"></div>
<div style="left:1227px;top:436px;width:1px;height:23px;background:#000;"></div>
<div style="left:1307px;top:436px;width:1px;height:23px;background:#000;"></div>
<div style="left:227px;top:436px;width:1px;height:23px;background:#000;"></div>
<div style="left:302px;top:257px;width:81px;height:20px;border:1px solid #000;border-top:none;background:#fff;"></div>
<div style="left:381px;top:274px;width:4px;height:4px;background:#000;border:1px solid #fff;"></div>
<div class="t" style="left:307px;top:260px;font-size:12px;color:#000;">bê</div>
<div style="left:1422px;top:112px;width:15px;height:513px;background:#f0f0f0;"></div>
<div style="left:1422px;top:130px;width:15px;height:59px;background:#cdcdcd;"></div>
<svg style="left:1424.5px;top:118.5px" width="10" height="6"><path d="M1 5.500l4-4 4 4" fill="none" stroke="#555" stroke-width="2.100"/></svg>
<svg style="left:1424.5px;top:614px" width="10" height="6"><path d="M1 0.500l4 4 4-4" fill="none" stroke="#555" stroke-width="2.100"/></svg>
<div style="left:1437px;top:89px;width:3px;height:748px;background:#f4f3ee;"></div>
<div style="left:311px;top:281px;width:900px;height:223px;background:#f0f0f0;border:1px solid #b4b4b4;border-right:3px solid #c6c6c6;border-bottom:1px solid #a8a8a8;"></div>
<div style="left:312px;top:282px;width:880px;height:200px;background:#fff;"></div>
<div style="left:312px;top:283px;width:880px;height:19px;background:#316ac5;"></div>
<div style="left:312px;top:302px;width:880px;height:1px;background:#c6c6c6;"></div>
<div style="left:317px;top:286px;width:13px;height:13px;background:linear-gradient(135deg,#dcdcd4,#fff);border:1px solid #1c5180;"></div>
<div class="t" style="left:339px;top:286px;font-size:15px;color:#fff;font-family:'Liberation Serif', serif;letter-spacing:0.4px;">AC.29371</div>
<div class="t" style="left:410px;top:286px;font-size:15px;color:#fff;font-family:'Liberation Serif', serif;letter-spacing:0.055px;">Nối cọc bê tông cốt thép dự ứng lực, kích thước cọc 50x50cm</div>
<div class="t" style="left:1081px;top:286px;font-size:15px;color:#fff;font-family:'Liberation Serif', serif;letter-spacing:0.3px;width:65px;text-align:center;">1 mối nối</div>
<div style="left:312px;top:303px;width:880px;height:19px;background:#fff;"></div>
<div style="left:312px;top:322px;width:880px;height:1px;background:#c6c6c6;"></div>
<div style="left:317px;top:306px;width:13px;height:13px;background:linear-gradient(135deg,#dcdcd4,#fff);border:1px solid #1c5180;"></div>
<div class="t" style="left:339px;top:306px;font-size:15px;color:#000;font-family:'Liberation Serif', serif;letter-spacing:0.4px;">AF.33310</div>
<div class="t" style="left:410px;top:306px;font-size:15px;color:#000;font-family:'Liberation Serif', serif;letter-spacing:0.055px;">Bê tông dầm cầu thi công bằng phương pháp đúc đẩy đổ bằng máy bơm bê tông 50m3/h</div>
<div class="t" style="left:1081px;top:306px;font-size:15px;color:#000;font-family:'Liberation Serif', serif;letter-spacing:0.3px;width:65px;text-align:center;">1m3</div>
<div style="left:312px;top:323px;width:880px;height:19px;background:#f0f0f0;"></div>
<div style="left:312px;top:342px;width:880px;height:1px;background:#c6c6c6;"></div>
<div style="left:317px;top:326px;width:13px;height:13px;background:linear-gradient(135deg,#dcdcd4,#fff);border:1px solid #1c5180;"></div>
<div class="t" style="left:339px;top:326px;font-size:15px;color:#000;font-family:'Liberation Serif', serif;letter-spacing:0.4px;">AF.33320</div>
<div class="t" style="left:410px;top:326px;font-size:15px;color:#000;font-family:'Liberation Serif', serif;letter-spacing:0.055px;">Bê tông dầm cầu thi công bằng phương pháp đúc hẫng trên cạn đổ bằng máy bơm bê tông 50m3/h</div>
<div class="t" style="left:1081px;top:326px;font-size:15px;color:#000;font-family:'Liberation Serif', serif;letter-spacing:0.3px;width:65px;text-align:center;">1m3</div>
<div style="left:312px;top:343px;width:880px;height:19px;background:#fff;"></div>
<div style="left:312px;top:362px;width:880px;height:1px;background:#c6c6c6;"></div>
<div style="left:317px;top:346px;width:13px;height:13px;background:linear-gradient(135deg,#dcdcd4,#fff);border:1px solid #1c5180;"></div>
<div class="t" style="left:339px;top:346px;font-size:15px;color:#000;font-family:'Liberation Serif', serif;letter-spacing:0.4px;">AF.33330</div>
<div class="t" style="left:410px;top:346px;font-size:15px;color:#000;font-family:'Liberation Serif', serif;letter-spacing:0.055px;">Bê tông dầm cầu thi công bằng phương pháp đúc hẫng dưới nước đổ bằng máy bơm bê tông 50m3/h</div>
<div class="t" style="left:1081px;top:346px;font-size:15px;color:#000;font-family:'Liberation Serif', serif;letter-spacing:0.3px;width:65px;text-align:center;">1m3</div>
<div style="left:312px;top:363px;width:880px;height:19px;background:#f0f0f0;"></div>
<div style="left:312px;top:382px;width:880px;height:1px;background:#c6c6c6;"></div>
<div style="left:317px;top:366px;width:13px;height:13px;background:linear-gradient(135deg,#dcdcd4,#fff);border:1px solid #1c5180;"></div>
<div class="t" style="left:339px;top:366px;font-size:15px;color:#000;font-family:'Liberation Serif', serif;letter-spacing:0.4px;">AF.33410</div>
<div class="t" style="left:410px;top:366px;font-size:15px;color:#000;font-family:'Liberation Serif', serif;letter-spacing:0.055px;">Bê tông dầm cầu đổ bằng máy bơm bê tông 50m3/h, dầm hộp</div>
<div class="t" style="left:1081px;top:366px;font-size:15px;color:#000;font-family:'Liberation Serif', serif;letter-spacing:0.3px;width:65px;text-align:center;">1m3</div>
<div style="left:312px;top:383px;width:880px;height:19px;background:#fff;"></div>
<div style="left:312px;top:402px;width:880px;height:1px;background:#c6c6c6;"></div>
<div style="left:317px;top:386px;width:13px;height:13px;background:linear-gradient(135deg,#dcdcd4,#fff);border:1px solid #1c5180;"></div>
<div class="t" style="left:339px;top:386px;font-size:15px;color:#000;font-family:'Liberation Serif', serif;letter-spacing:0.4px;">AF.33420</div>
<div class="t" style="left:410px;top:386px;font-size:15px;color:#000;font-family:'Liberation Serif', serif;letter-spacing:0.055px;">Bê tông dầm cầu đổ bằng máy bơm bê tông 50m3/h, dầm bản</div>
<div class="t" style="left:1081px;top:386px;font-size:15px;color:#000;font-family:'Liberation Serif', serif;letter-spacing:0.3px;width:65px;text-align:center;">1m3</div>
<div style="left:312px;top:403px;width:880px;height:19px;background:#f0f0f0;"></div>
<div style="left:312px;top:422px;width:880px;height:1px;background:#c6c6c6;"></div>
<div style="left:317px;top:406px;width:13px;height:13px;background:linear-gradient(135deg,#dcdcd4,#fff);border:1px solid #1c5180;"></div>
<div class="t" style="left:339px;top:406px;font-size:15px;color:#000;font-family:'Liberation Serif', serif;letter-spacing:0.4px;">AF.37710</div>
<div class="t" style="left:410px;top:406px;font-size:15px;color:#000;font-family:'Liberation Serif', serif;letter-spacing:0.055px;">Bê tông lấp đầy phễu nhựa móng Top - base</div>
<div class="t" style="left:1081px;top:406px;font-size:15px;color:#000;font-family:'Liberation Serif', serif;letter-spacing:0.3px;width:65px;text-align:center;">1m3</div>
<div style="left:312px;top:423px;width:880px;height:19px;background:#fff;"></div>
<div style="left:312px;top:442px;width:880px;height:1px;background:#c6c6c6;"></div>
<div style="left:317px;top:426px;width:13px;height:13px;background:linear-gradient(135deg,#dcdcd4,#fff);border:1px solid #1c5180;"></div>
<div class="t" style="left:339px;top:426px;font-size:15px;color:#000;font-family:'Liberation Serif', serif;letter-spacing:0.4px;">AF.39111</div>
<div class="t" style="left:410px;top:426px;font-size:15px;color:#000;font-family:'Liberation Serif', serif;letter-spacing:0.055px;">Bê tông dầm lăn (RCC) mặt đường, chiều dày lớp rải 12cm</div>
<div class="t" style="left:1081px;top:426px;font-size:15px;color:#000;font-family:'Liberation Serif', serif;letter-spacing:0.3px;width:65px;text-align:center;">100m2</div>
<div style="left:312px;top:443px;width:880px;height:19px;background:#f0f0f0;"></div>
<div style="left:312px;top:462px;width:880px;height:1px;background:#c6c6c6;"></div>
<div style="left:317px;top:446px;width:13px;height:13px;background:linear-gradient(135deg,#dcdcd4,#fff);border:1px solid #1c5180;"></div>
<div class="t" style="left:339px;top:446px;font-size:15px;color:#000;font-family:'Liberation Serif', serif;letter-spacing:0.4px;">AF.39112</div>
<div class="t" style="left:410px;top:446px;font-size:15px;color:#000;font-family:'Liberation Serif', serif;letter-spacing:0.055px;">Bê tông dầm lăn (RCC) mặt đường, chiều dày lớp rải 14cm</div>
<div class="t" style="left:1081px;top:446px;font-size:15px;color:#000;font-family:'Liberation Serif', serif;letter-spacing:0.3px;width:65px;text-align:center;">100m2</div>
<div style="left:312px;top:463px;width:880px;height:18px;background:#fff;"></div>
<div style="left:312px;top:481px;width:880px;height:1px;background:#c6c6c6;"></div>
<div style="left:317px;top:466px;width:13px;height:13px;background:linear-gradient(135deg,#dcdcd4,#fff);border:1px solid #1c5180;"></div>
<div class="t" style="left:339px;top:466px;font-size:15px;color:#000;font-family:'Liberation Serif', serif;letter-spacing:0.4px;">AF.39113</div>
<div class="t" style="left:410px;top:466px;font-size:15px;color:#000;font-family:'Liberation Serif', serif;letter-spacing:0.055px;">Bê tông dầm lăn (RCC) mặt đường, chiều dày lớp rải 16cm</div>
<div class="t" style="left:1081px;top:466px;font-size:15px;color:#000;font-family:'Liberation Serif', serif;letter-spacing:0.3px;width:65px;text-align:center;">100m2</div>
<div style="left:337px;top:283px;width:1px;height:199px;background:#c6c6c6;"></div>
<div style="left:407px;top:283px;width:1px;height:199px;background:#c6c6c6;"></div>
<div style="left:1080px;top:283px;width:1px;height:199px;background:#c6c6c6;"></div>
<div style="left:1146px;top:283px;width:1px;height:199px;background:#c6c6c6;"></div>
<div style="left:1161px;top:283px;width:1px;height:199px;background:#c6c6c6;"></div>
<div style="left:1176px;top:283px;width:1px;height:199px;background:#c6c6c6;"></div>
<div style="left:312px;top:282px;width:880px;height:1px;background:#c6c6c6;"></div>
<div style="left:1192px;top:282px;width:15px;height:200px;background:#f0f0f0;"></div>
<div style="left:1193px;top:300px;width:13px;height:40px;background:#cdcdcd;"></div>
<svg style="left:1194.5px;top:288px" width="10" height="6"><path d="M1 5.500l4-4 4 4" fill="none" stroke="#555" stroke-width="2.100"/></svg>
<svg style="left:1194.5px;top:470px" width="10" height="6"><path d="M1 0.500l4 4 4-4" fill="none" stroke="#555" stroke-width="2.100"/></svg>
<div style="left:312px;top:482px;width:896px;height:21px;background:linear-gradient(#f6f6f6,#dedede);"></div>
<div class="t" style="left:318px;top:487px;font-size:11px;color:#000;font-weight:bold;letter-spacing:0.4px;">Hiển thị:</div>
<div style="left:377px;top:486px;width:13px;height:13px;background:#fff;border:1px solid #333;"></div>
<svg style="left:379px;top:489px" width="9" height="8"><path d="M0.500 3.500l2.800 3 5-6" fill="none" stroke="#222" stroke-width="1.200"/></svg>
<div class="t" style="left:396px;top:487px;font-size:11px;color:#000;letter-spacing:-0.2px;">Đơn vị</div>
<div style="left:435px;top:486px;width:13px;height:13px;background:#fff;border:1px solid #333;"></div>
<svg style="left:437px;top:489px" width="9" height="8"><path d="M0.500 3.500l2.800 3 5-6" fill="none" stroke="#222" stroke-width="1.200"/></svg>
<div class="t" style="left:454px;top:487px;font-size:11px;color:#000;letter-spacing:-0.2px;">ĐGVL</div>
<div style="left:491px;top:486px;width:13px;height:13px;background:#fff;border:1px solid #333;"></div>
<div class="t" style="left:510px;top:487px;font-size:11px;color:#000;letter-spacing:-0.2px;">ĐGVLp</div>
<div style="left:553px;top:486px;width:13px;height:13px;background:#fff;border:1px solid #333;"></div>
<svg style="left:555px;top:489px" width="9" height="8"><path d="M0.500 3.500l2.800 3 5-6" fill="none" stroke="#222" stroke-width="1.200"/></svg>
<div class="t" style="left:572px;top:487px;font-size:11px;color:#000;letter-spacing:-0.2px;">ĐGNC</div>
<div style="left:611px;top:486px;width:13px;height:13px;background:#fff;border:1px solid #333;"></div>
<svg style="left:613px;top:489px" width="9" height="8"><path d="M0.500 3.500l2.800 3 5-6" fill="none" stroke="#222" stroke-width="1.200"/></svg>
<div class="t" style="left:630px;top:487px;font-size:11px;color:#000;letter-spacing:-0.2px;">ĐG máy</div>
<div style="left:1147px;top:483px;width:45px;height:20px;background:linear-gradient(#f4f4f4,#e0e0e0);border:1px solid #b0b0b0;"></div>
<div class="t" style="left:1147px;top:488px;font-size:11px;color:#000;letter-spacing:-0.2px;width:45px;text-align:center;">Chọn</div>
<svg style="left:0;top:0" width="1440" height="900"><ellipse cx="339" cy="281.500" rx="58" ry="31.600" fill="none" stroke="#e0191e" stroke-width="5.500"/><path d="M172 322L280 287" stroke="#e0191e" stroke-width="4.500"/></svg>
<div class="t" style="left:12.8px;top:307.4px;font-size:25px;color:#e0191e;font-family:'Liberation Serif', serif;font-weight:bold;letter-spacing:1.05px;">Tính năng tra</div>
<div class="t" style="left:12.8px;top:338.54999999999995px;font-size:25px;color:#e0191e;font-family:'Liberation Serif', serif;font-weight:bold;letter-spacing:1.05px;">Đơn giá, Định</div>
<div class="t" style="left:12.8px;top:369.7px;font-size:25px;color:#e0191e;font-family:'Liberation Serif', serif;font-weight:bold;letter-spacing:1.05px;">mức thông</div>
<div class="t" style="left:12.8px;top:400.84999999999997px;font-size:25px;color:#e0191e;font-family:'Liberation Serif', serif;font-weight:bold;letter-spacing:1.05px;">minh như</div>
<div class="t" style="left:12.8px;top:432.0px;font-size:25px;color:#e0191e;font-family:'Liberation Serif', serif;font-weight:bold;letter-spacing:1.05px;">Google</div>
<div style="left:200px;top:625px;width:578px;height:1px;background:#c8c5b5;"></div>
<div style="left:778px;top:625px;width:659px;height:1px;background:#f0f0f0;"></div>
<div style="left:201px;top:626px;width:577px;height:17px;background:#f0f0f0;"></div>
<svg style="left:203px;top:628px" width="3" height="14"><rect x="0" y="1" width="2" height="2" fill="#404040"/><rect x="0" y="5" width="2" height="2" fill="#404040"/><rect x="0" y="9" width="2" height="2" fill="#404040"/></svg>
<div class="t" style="left:210px;top:629px;font-size:11px;color:#000;font-weight:bold;letter-spacing:0.45px;">Hiển thị cột:</div>
<div style="left:286px;top:627px;width:13px;height:13px;background:#fff;border:1px solid #333;"></div>
<div class="t" style="left:305px;top:629px;font-size:11px;color:#000;letter-spacing:-0.2px;">Kích thước</div>
<div style="left:367px;top:627px;width:13px;height:13px;background:#fff;border:1px solid #333;"></div>
<svg style="left:369px;top:630px" width="9" height="8"><path d="M0.500 3.500l2.800 3 5-6" fill="none" stroke="#222" stroke-width="1.200"/></svg>
<div class="t" style="left:386px;top:629px;font-size:11px;color:#000;letter-spacing:-0.2px;">Đơn giá</div>
<div style="left:432px;top:627px;width:13px;height:13px;background:#fff;border:1px solid #333;"></div>
<svg style="left:434px;top:630px" width="9" height="8"><path d="M0.500 3.500l2.800 3 5-6" fill="none" stroke="#222" stroke-width="1.200"/></svg>
<div class="t" style="left:451px;top:629px;font-size:11px;color:#000;letter-spacing:-0.2px;">Thành tiền</div>
<div style="left:511px;top:627px;width:13px;height:13px;background:#fff;border:1px solid #333;"></div>
<div class="t" style="left:530px;top:629px;font-size:11px;color:#000;letter-spacing:-0.2px;">VL phụ</div>
<div style="left:573px;top:627px;width:13px;height:13px;background:#fff;border:1px solid #333;"></div>
<div class="t" style="left:592px;top:629px;font-size:11px;color:#000;letter-spacing:-0.2px;">Hệ số</div>
<svg style="left:635px;top:628px" width="3" height="14"><rect x="0" y="1" width="2" height="2" fill="#404040"/><rect x="0" y="5" width="2" height="2" fill="#404040"/><rect x="0" y="9" width="2" height="2" fill="#404040"/></svg>
<div style="left:640px;top:627px;width:13px;height:13px;background:#fff;border:1px solid #333;"></div>
<div class="t" style="left:659px;top:629px;font-size:11px;color:#000;letter-spacing:-0.2px;">Ẩn diễn giải khối lượng</div>
<div style="left:778px;top:626px;width:659px;height:17px;background:#f0f0f0;"></div>
<div style="left:794px;top:626px;width:197px;height:17px;background:#cdcdcd;"></div>
<svg style="left:782px;top:629px" width="6" height="9"><path d="M5 0.500l-4 4 4 4" fill="none" stroke="#555" stroke-width="2.100"/></svg>
<svg style="left:1409.5px;top:629px" width="6" height="9"><path d="M1 0.500l4 4-4 4" fill="none" stroke="#555" stroke-width="2.100"/></svg>
<div style="left:198px;top:643px;width:1239px;height:2px;background:linear-gradient(#a8a8a4,#c8c8c4);"></div>
<div style="left:198px;top:645px;width:1239px;height:19px;background:#dcdcdc;"></div>
<div style="left:201px;top:643px;width:98px;height:21px;background:#fff;"></div>
<div style="left:299px;top:645px;width:94px;height:18px;background:linear-gradient(#f4f4f2,#e8e8e6);border-right:1px solid #d4d4d0;"></div>
<div class="t" style="left:299px;top:649px;font-size:11px;color:#000;letter-spacing:-0.2px;width:94px;text-align:center;">Nhân công</div>
<div style="left:393px;top:645px;width:94px;height:18px;background:linear-gradient(#f4f4f2,#e8e8e6);border-right:1px solid #d4d4d0;"></div>
<div class="t" style="left:393px;top:649px;font-size:11px;color:#000;letter-spacing:-0.2px;width:94px;text-align:center;">Máy</div>
<div class="t" style="left:201px;top:647px;font-size:11px;color:#000;letter-spacing:-0.2px;width:98px;text-align:center;">Vật liệu</div>
<div class="t" style="left:505px;top:649px;font-size:11px;color:#000;letter-spacing:-0.2px;">Hệ số ĐM:</div>
<div style="left:559px;top:645px;width:57px;height:18px;background:#fff;"></div>
<div class="t" style="left:564px;top:648px;font-size:11px;color:#000;font-weight:bold;letter-spacing:0.6px;">1.0000</div>
<div style="left:605px;top:646px;width:11px;height:16px;background:#e8e8e8;border:1px solid #c0c0c0;"></div>
<svg style="left:607px;top:648px" width="7" height="12"><path d="M0.500 4.500l3-3.500 3 3.500zM0.500 7.500l3 3.500 3-3.500z" fill="#222"/></svg>
<svg style="left:1424px;top:648px" width="10" height="12"><rect x="3" y="1.500" width="4" height="5.500" fill="#f6e6c0" stroke="#222" stroke-width="1"/><path d="M1 7.500h8M5 7.500v3.500" stroke="#222" stroke-width="1.200" fill="none"/></svg>
<div style="left:200px;top:664px;width:1222px;height:174px;background:#fff;"></div>
<div style="left:200px;top:664px;width:1px;height:174px;background:#8e8c80;"></div>
<div style="left:201px;top:664px;width:1220px;height:21px;background:#ece9d8;border-top:1px solid #8e8c80;border-bottom:1px solid #8e8c80;"></div>
<div style="left:201px;top:685px;width:27px;height:152px;background:#ece9d8;border-right:1px solid #8e8c80;"></div>
<div style="left:227px;top:665px;width:1px;height:172px;background:#8e8c80;"></div>
<div style="left:260px;top:665px;width:1px;height:172px;background:#8e8c80;"></div>
<div class="t" style="left:228px;top:668px;font-size:13.3px;color:#000;width:32px;text-align:center;">STT</div>
<div style="left:345px;top:665px;width:1px;height:172px;background:#8e8c80;"></div>
<div class="t" style="left:261px;top:668px;font-size:13.3px;color:#000;width:84px;text-align:center;">Mã VL</div>
<div style="left:645px;top:665px;width:1px;height:172px;background:#8e8c80;"></div>
<div class="t" style="left:346px;top:668px;font-size:13.3px;color:#000;width:299px;text-align:center;">Tên vật liệu</div>
<div style="left:700px;top:665px;width:1px;height:172px;background:#8e8c80;"></div>
<div class="t" style="left:646px;top:668px;font-size:13.3px;color:#000;width:54px;text-align:center;">Đơn vị</div>
<div style="left:770px;top:665px;width:1px;height:172px;background:#8e8c80;"></div>
<div class="t" style="left:701px;top:668px;font-size:13.3px;color:#000;width:69px;text-align:center;">Hao phí</div>
<div style="left:857px;top:665px;width:1px;height:172px;background:#8e8c80;"></div>
<div class="t" style="left:771px;top:668px;font-size:13.3px;color:#000;width:86px;text-align:center;">Giá gốc</div>
<div style="left:944px;top:665px;width:1px;height:172px;background:#8e8c80;"></div>
<div class="t" style="left:858px;top:668px;font-size:13.3px;color:#000;width:86px;text-align:center;">Giá TB</div>
<div style="left:999px;top:665px;width:1px;height:172px;background:#8e8c80;"></div>
<div class="t" style="left:945px;top:668px;font-size:13.3px;color:#000;width:54px;text-align:center;">Loại VL</div>
<div style="left:201px;top:704px;width:26px;height:1px;background:#8e8c80;"></div>
<div style="left:228px;top:704px;width:1193px;height:1px;border-top:1px dotted #888;"></div>
<div class="t" style="left:201px;top:689px;font-size:13.3px;color:#000;width:26px;text-align:center;">1</div>
<div style="left:201px;top:724px;width:26px;height:1px;background:#8e8c80;"></div>
<div style="left:228px;top:724px;width:1193px;height:1px;border-top:1px dotted #888;"></div>
<div class="t" style="left:201px;top:709px;font-size:13.3px;color:#000;width:26px;text-align:center;">2</div>
<div style="left:201px;top:744px;width:26px;height:1px;background:#8e8c80;"></div>
<div style="left:228px;top:744px;width:1193px;height:1px;border-top:1px dotted #888;"></div>
<div class="t" style="left:201px;top:729px;font-size:13.3px;color:#000;width:26px;text-align:center;">3</div>
<div style="left:201px;top:764px;width:26px;height:1px;background:#8e8c80;"></div>
<div style="left:228px;top:764px;width:1193px;height:1px;border-top:1px dotted #888;"></div>
<div class="t" style="left:201px;top:749px;font-size:13.3px;color:#000;width:26px;text-align:center;">4</div>
<div style="left:201px;top:784px;width:26px;height:1px;background:#8e8c80;"></div>
<div style="left:228px;top:784px;width:1193px;height:1px;border-top:1px dotted #888;"></div>
<div class="t" style="left:201px;top:769px;font-size:13.3px;color:#000;width:26px;text-align:center;">5</div>
<div style="left:201px;top:804px;width:26px;height:1px;background:#8e8c80;"></div>
<div style="left:228px;top:804px;width:1193px;height:1px;border-top:1px dotted #888;"></div>
<div class="t" style="left:201px;top:789px;font-size:13.3px;color:#000;width:26px;text-align:center;">6</div>
<div style="left:201px;top:824px;width:26px;height:1px;background:#8e8c80;"></div>
<div style="left:228px;top:824px;width:1193px;height:1px;border-top:1px dotted #888;"></div>
<div class="t" style="left:201px;top:809px;font-size:13.3px;color:#000;width:26px;text-align:center;">7</div>
<div class="t" style="left:201px;top:829px;font-size:13.3px;color:#000;width:26px;text-align:center;">8</div>
<div style="left:0px;top:837px;width:1440px;height:1px;background:#8e8c80;"></div>
<div style="left:1422px;top:664px;width:15px;height:173px;background:#f0f0f0;"></div>
<div style="left:1422px;top:681px;width:15px;height:17px;background:#cdcdcd;"></div>
<svg style="left:1424.5px;top:670px" width="10" height="6"><path d="M1 5.500l4-4 4 4" fill="none" stroke="#555" stroke-width="2.100"/></svg>
<svg style="left:1424.5px;top:826.5px" width="10" height="6"><path d="M1 0.500l4 4 4-4" fill="none" stroke="#555" stroke-width="2.100"/></svg>
<div style="left:0px;top:838px;width:1440px;height:22px;background:#ece9d8;"></div>
<div class="t" style="left:6px;top:844px;font-size:11.5px;color:#000;">Ready</div>
<div style="left:904px;top:839px;width:310px;height:21px;background:#f0f0f0;"></div>
<svg style="left:906px;top:842px" width="14" height="14" viewBox="0 0 14 14"><circle cx="7.300" cy="6.800" r="4.800" fill="none" stroke="#279427" stroke-width="3.400"/><circle cx="7.300" cy="6.800" r="4.800" fill="none" stroke="#48c448" stroke-width="2.300"/><path d="M-0.300 6.800h6.300l-3.200 5.400z" fill="#48c448" stroke="#279427" stroke-width="0.700"/></svg>
<div class="t" style="left:925px;top:843px;font-size:12px;color:#000;">Thông báo</div>
<svg style="left:1001px;top:841px" width="15" height="17"><rect x="0.500" y="0.500" width="13.500" height="15" rx="2" fill="#1e8cf0"/><path d="M9 15.500h5v-5z" fill="#0a64c8"/><circle cx="7.200" cy="7.500" r="4.800" fill="#fff"/><path d="M3.800 7.500h6.800M5.600 5.800l-1.800 1.700 1.800 1.700M8.800 5.800l1.800 1.700-1.800 1.700" stroke="#1e8cf0" stroke-width="1.100" fill="none"/></svg>
<div class="t" style="left:1020px;top:843px;font-size:12px;color:#000;letter-spacing:-0.15px;">Hỗ trợ từ xa</div>
<div class="t" style="left:1280px;top:839px;font-size:15px;color:#0000ee;font-family:'Liberation Serif', serif;text-decoration:underline;">Yêu cầu thêm tính năng ...</div>
<div style="left:0px;top:860px;width:1440px;height:40px;background:#0a0a0a;"></div>
<div style="left:48px;top:860px;width:344px;height:40px;background:#343434;"></div>
<svg style="left:16px;top:872px" width="17" height="17"><path d="M0 2.400l6.900-1v6.700h-6.900zM7.800 1.300l9.200-1.300v8.100h-9.200zM0 9h6.900v6.700l-6.900-1zM7.800 9h9.200v8l-9.200-1.300z" fill="#fff"/></svg>
<svg style="left:57px;top:870px" width="21" height="21"><circle cx="10.500" cy="10.500" r="8.700" fill="none" stroke="#f2f2f2" stroke-width="2.600"/></svg>
<div class="t" style="left:88px;top:871px;font-size:16.5px;color:#b4b4b4;">Type here to search</div>
<svg style="left:366px;top:870px" width="11" height="20"><rect x="3" y="1" width="5" height="10.500" rx="2.500" fill="none" stroke="#c8c8c8" stroke-width="1.100"/><path d="M0.800 8.500v1.500a4.700 4.700 0 0 0 9.400 0v-1.500M5.500 14.500v3.500M2.500 18.300h6" fill="none" stroke="#c8c8c8" stroke-width="1.100"/></svg>
<svg style="left:406px;top:873px" width="21" height="14"><rect x="4.500" y="0.700" width="12" height="12.600" fill="none" stroke="#fff" stroke-width="1.400"/><path d="M2.500 2.500h-2v9h2M18.500 2.500h2v9h-2" fill="none" stroke="#fff" stroke-width="1.200"/></svg>
<svg style="left:456px;top:870px" width="23" height="20"><path d="M0.500 18V2.500h7l2 2h12v13.500z" fill="#f6d36c"/><path d="M0.500 18V6.500h21.500v11.500z" fill="#fbe08a"/><path d="M4 19v-6.500h14v6.500h-3.500v-3.500h-7v3.500z" fill="#3a9be8"/></svg>
<svg style="left:504px;top:869px" width="24" height="22"><path d="M0 2.500l13.500-2.500v22l-13.500-2.500z" fill="#1f7244"/><rect x="13.500" y="2.500" width="10" height="17" fill="#fff" stroke="#1f7244" stroke-width="1"/><path d="M15 5.500h3.500M19.500 5.500h3M15 8.500h3.500M19.500 8.500h3M15 11.500h3.500M19.500 11.500h3M15 14.500h3.500M19.500 14.500h3M15 17h3.500M19.500 17h3" stroke="#1f7244" stroke-width="1.600"/><path d="M3.800 6.500l5.700 9M9.500 6.500l-5.700 9" stroke="#fff" stroke-width="2"/></svg>
<svg style="left:553px;top:869px" width="24" height="22"><path d="M0 2.500l13.500-2.500v22l-13.500-2.500z" fill="#2b5797"/><rect x="13.500" y="2.500" width="10" height="17" fill="#fff" stroke="#2b5797" stroke-width="1"/><path d="M15 5.500h7M15 8.500h7M15 11.500h7M15 14.500h7M15 17h7" stroke="#2b5797" stroke-width="1.500"/><path d="M2.500 7l1.800 8.500 2.400-7 2.400 7 1.800-8.500" stroke="#fff" stroke-width="1.500" fill="none"/></svg>
<svg style="left:602px;top:868px" width="24" height="24"><defs><radialGradient id="ffg" cx="0.400" cy="0.700" r="0.800"><stop offset="0" stop-color="#ffc83a"/><stop offset="0.500" stop-color="#f8901e"/><stop offset="1" stop-color="#e04a18"/></radialGradient></defs><circle cx="12" cy="12.500" r="11" fill="url(#ffg)"/><circle cx="13.500" cy="10" r="7" fill="#2b4b9e"/><circle cx="15" cy="8" r="3.500" fill="#4a78c8"/><path d="M3.500 6c2-1.500 4.500-1.500 6.500-0.500 1.500 1 2.500 1 4.500 1-0.500 1.500-2 2-3 2.500 0.500 1.500 2.500 2.500 5 1.500-1 3-4 4.500-7 4-4-0.800-6.500-4.500-6-8.500z" fill="#f5861e"/></svg>
<svg style="left:651px;top:868px" width="24" height="24"><circle cx="12" cy="12" r="11" fill="#dc4437"/><path d="M12 12L2.500 6.500A11 11 0 0 0 7.500 22z" fill="#1a9f5a"/><path d="M12 12l-4.500 10A11 11 0 0 0 22.800 10z" fill="#fdce40"/><path d="M12 12h10.800a11 11 0 0 0-20.300-5.500z" fill="#dc4437"/><circle cx="12" cy="12" r="5.200" fill="#fff"/><circle cx="12" cy="12" r="4.100" fill="#4a8af4"/></svg>
<svg style="left:700px;top:868px" width="24" height="24"><path d="M8 2l14 3.500-5 16-14-3.500z" fill="#cfe6ec" stroke="#8aa6ae" stroke-width="0.800"/><path d="M8 2l14 3.500-1.200 3.700-14-3.500z" fill="#7fb8c4"/><path d="M3 18l14 3.500 1.200 1-14-3.300z" fill="#8a6a3a"/></svg>
<div style="left:737px;top:860px;width:48px;height:40px;background:#3a3a3c;"></div>
<svg style="left:749px;top:869px" width="23" height="23"><rect x="1.200" y="1.200" width="20.600" height="20.600" fill="#fff" stroke="#4d8a4d" stroke-width="2.400"/><path d="M5.500 4.500h11.500v3.600h-1.300c-0.200-1.500-0.800-2-2.400-2h-4.400l4.700 5.200-5.100 5.600h5c1.700 0 2.500-0.700 2.800-2.400h1.200l-0.500 4h-12v-1l5.700-6.200-5.200-5.800z" fill="#2f6e2f"/></svg>
<svg style="left:798px;top:868px" width="24" height="24"><path d="M12 1.800a9.800 9.800 0 0 1 9.600 11.800a6 6 0 0 1-8 8a9.800 9.800 0 0 1-11.400-11.400a6 6 0 0 1 8-8a9.800 9.800 0 0 1 1.800-0.400z" fill="#12a5f0"/><path d="M15.800 8.800c-0.600-1.500-2.200-2.200-4-2.200-2.200 0-4 1.100-4 3 0 3.600 6.200 2.100 6.200 4.500 0 1-1 1.500-2.200 1.500-1.600 0-2.500-0.800-3-2.100" fill="none" stroke="#fff" stroke-width="2.400" stroke-linecap="round"/></svg>
<svg style="left:848px;top:869px" width="23" height="23"><rect x="0" y="0" width="23" height="23" rx="1.500" fill="#0e74e2"/><circle cx="11.500" cy="11.500" r="8.600" fill="#fff"/><path d="M5 11.500l4-3.300v2.200h5v-2.200l4 3.300-4 3.300v-2.200h-5v2.200z" fill="#0e74e2"/></svg>
<div style="left:643px;top:898px;width:40px;height:2px;background:#76b9ed;"></div>
<div style="left:692px;top:898px;width:40px;height:2px;background:#76b9ed;"></div>
<div style="left:737px;top:898px;width:48px;height:2px;background:#76b9ed;"></div>
<div style="left:790px;top:898px;width:40px;height:2px;background:#76b9ed;"></div>
<div style="left:839px;top:898px;width:40px;height:2px;background:#76b9ed;"></div>
<svg style="left:1191px;top:876px" width="13" height="8"><path d="M0.700 7l5.800-5.800 5.800 5.800" fill="none" stroke="#fff" stroke-width="1.300"/></svg>
<svg style="left:1214px;top:876px" width="16" height="9"><rect x="0.600" y="0.600" width="12.800" height="7.800" fill="none" stroke="#fff" stroke-width="1.200"/><rect x="2" y="2" width="4.500" height="5" fill="#fff"/><rect x="14" y="2.800" width="1.600" height="3.400" fill="#fff"/></svg>
<svg style="left:1240px;top:874px" width="13" height="13"><path d="M1 12A11 11 0 0 1 12 1M4 12a8 8 0 0 1 8-8M7 12a5 5 0 0 1 5-5" fill="none" stroke="#c8c8c8" stroke-width="1.100"/><circle cx="11" cy="11.300" r="1.400" fill="#fff"/></svg>
<svg style="left:1261px;top:872px" width="17" height="15"><path d="M0.700 5.200h2.600l3.500-3.500v11.600l-3.500-3.500h-2.600z" fill="none" stroke="#fff" stroke-width="1.100"/><path d="M9 5a3.500 3.500 0 0 1 0 5M11.200 3a6.300 6.300 0 0 1 0 9M13.500 1a9.200 9.200 0 0 1 0 13" fill="none" stroke="#fff" stroke-width="1.100"/></svg>
<div class="t" style="left:1287px;top:874px;font-size:12px;color:#fff;letter-spacing:-0.9px;">ENG</div>
<div class="t" style="left:1321.6px;top:865px;font-size:12px;color:#fff;letter-spacing:-0.6px;width:60px;text-align:center;">16:24</div>
<div class="t" style="left:1322px;top:882.6px;font-size:12px;color:#fff;width:60px;text-align:center;">09/11/2017</div>
<svg style="left:1399px;top:872px" width="17" height="16"><path d="M0.700 0.700h15.600v11h-5.300l-2.500 3-2.500-3h-5.300z" fill="none" stroke="#fff" stroke-width="1.300"/></svg>
<div style="left:1435px;top:860px;width:1px;height:40px;background:#4a4a4a;"></div>
</body></html>
